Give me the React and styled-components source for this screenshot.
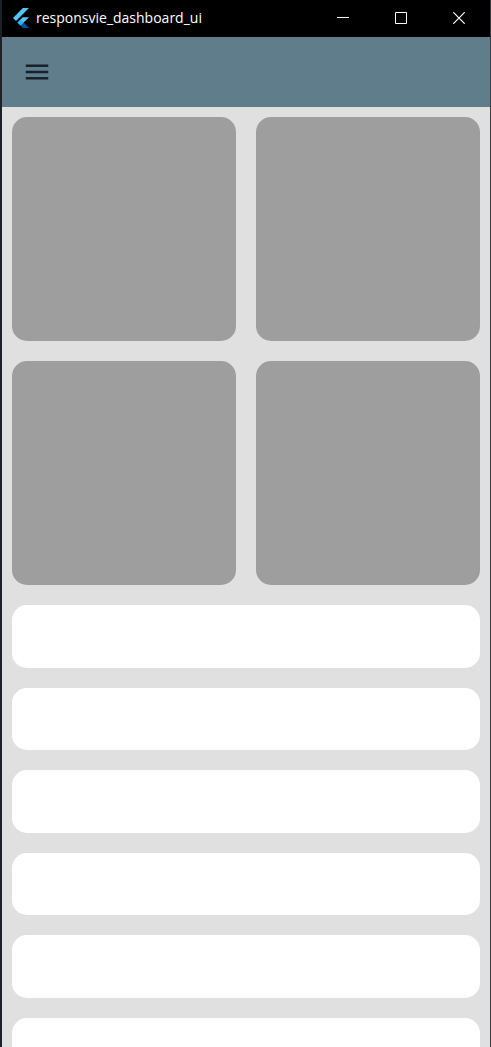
import React from "react";
import styled, { createGlobalStyle } from "styled-components";

const GlobalStyle = createGlobalStyle`
  * { box-sizing: border-box; }
  body { margin: 0; background: #1d2126; }
`;

const Window = styled.div`
  display: flex;
  flex-direction: column;
  height: 100vh;
  overflow: hidden;
  border-left: 2px solid #1d2126;
  border-right: 1px solid #3a3d40;
  background: #e0e0e0;
  font-family: "Open Sans", "Noto Sans", sans-serif;
`;

const TitleBar = styled.header`
  display: flex;
  flex: none;
  align-items: center;
  height: 37px;
  padding: 0 2px 1px 11px;
  background: #000;
  color: #fff;
`;

const Title = styled.h1`
  flex: 1;
  min-width: 0;
  margin: 0 0 0 7px;
  overflow: hidden;
  white-space: nowrap;
  font-size: 14px;
  font-weight: 400;
  line-height: 20px;
`;

const WindowButton = styled.button`
  display: flex;
  align-items: center;
  justify-content: center;
  width: 58px;
  height: 36px;
  padding: 0;
  border: 0;
  background: transparent;
  color: inherit;
`;

const AppBar = styled.nav`
  display: flex;
  flex: none;
  align-items: center;
  height: 70px;
  padding: 0 10px;
  background: #607d8b;
`;

const MenuButton = styled.button`
  display: flex;
  align-items: center;
  justify-content: center;
  width: 50px;
  height: 50px;
  padding: 0;
  border: 0;
  background: transparent;
  color: #16222a;
`;

const Content = styled.main`
  display: flex;
  flex: 1;
  flex-direction: column;
  gap: 20px;
  min-height: 0;
  padding: 10px;
  overflow: hidden;
`;

const CardGrid = styled.section`
  display: grid;
  flex: none;
  grid-template-columns: repeat(2, 1fr);
  gap: 20px;
`;

const Card = styled.div`
  aspect-ratio: 1;
  border-radius: 15px;
  background: #9e9e9e;
`;

const TileList = styled.section`
  display: flex;
  flex: none;
  flex-direction: column;
  gap: 20px;
  height: 475px;
`;

const Tile = styled.div`
  flex: 1;
  border-radius: 15px;
  background: #fff;
`;

const FlutterLogo = () => (
  <svg width="16" height="20" viewBox="0 0 256 317" aria-hidden="true">
    <path d="M157.7 0L0 157.7L48.8 206.5L255.3 0Z" fill="#54c5f8" />
    <path d="M156.6 145.4L72.1 229.8L121.1 279.5L169.8 230.8L255.3 145.4Z" fill="#54c5f8" />
    <path d="M121.1 279.5L158.2 316.6H255.3L169.8 230.8Z" fill="#01579b" />
    <path d="M71.6 230.4L120.4 181.6L169.8 230.8L121.1 279.5Z" fill="#29b6f6" />
  </svg>
);

const tiles = [1, 2, 3, 4, 5, 6];
const cards = [1, 2, 3, 4];

export default function App() {
  return (
    <>
      <GlobalStyle />
      <Window>
        <TitleBar>
          <FlutterLogo />
          <Title>responsvie_dashboard_ui</Title>
          <WindowButton aria-label="Minimize">
            <svg width="12" height="12" viewBox="0 0 12 12" shapeRendering="crispEdges">
              <path d="M0 5H12V6H0Z" fill="currentColor" />
            </svg>
          </WindowButton>
          <WindowButton aria-label="Maximize">
            <svg width="12" height="12" viewBox="0 0 12 12">
              <path d="M.5 .5H11.5V11.5H.5Z" fill="none" stroke="currentColor" />
            </svg>
          </WindowButton>
          <WindowButton aria-label="Close">
            <svg width="12" height="12" viewBox="0 0 12 12">
              <path d="M.3 .3L11.7 11.7M11.7 .3L.3 11.7" fill="none" stroke="currentColor" strokeWidth="1.2" />
            </svg>
          </WindowButton>
        </TitleBar>
        <AppBar>
          <MenuButton aria-label="Open menu">
            <svg width="30" height="30" viewBox="0 0 24 24" fill="currentColor">
              <path d="M3 18h18v-2H3v2zm0-5h18v-2H3v2zm0-7v2h18V6H3z" />
            </svg>
          </MenuButton>
        </AppBar>
        <Content>
          <CardGrid>
            {cards.map((id) => (
              <Card key={id} />
            ))}
          </CardGrid>
          <TileList>
            {tiles.map((id) => (
              <Tile key={id} />
            ))}
          </TileList>
        </Content>
      </Window>
    </>
  );
}
